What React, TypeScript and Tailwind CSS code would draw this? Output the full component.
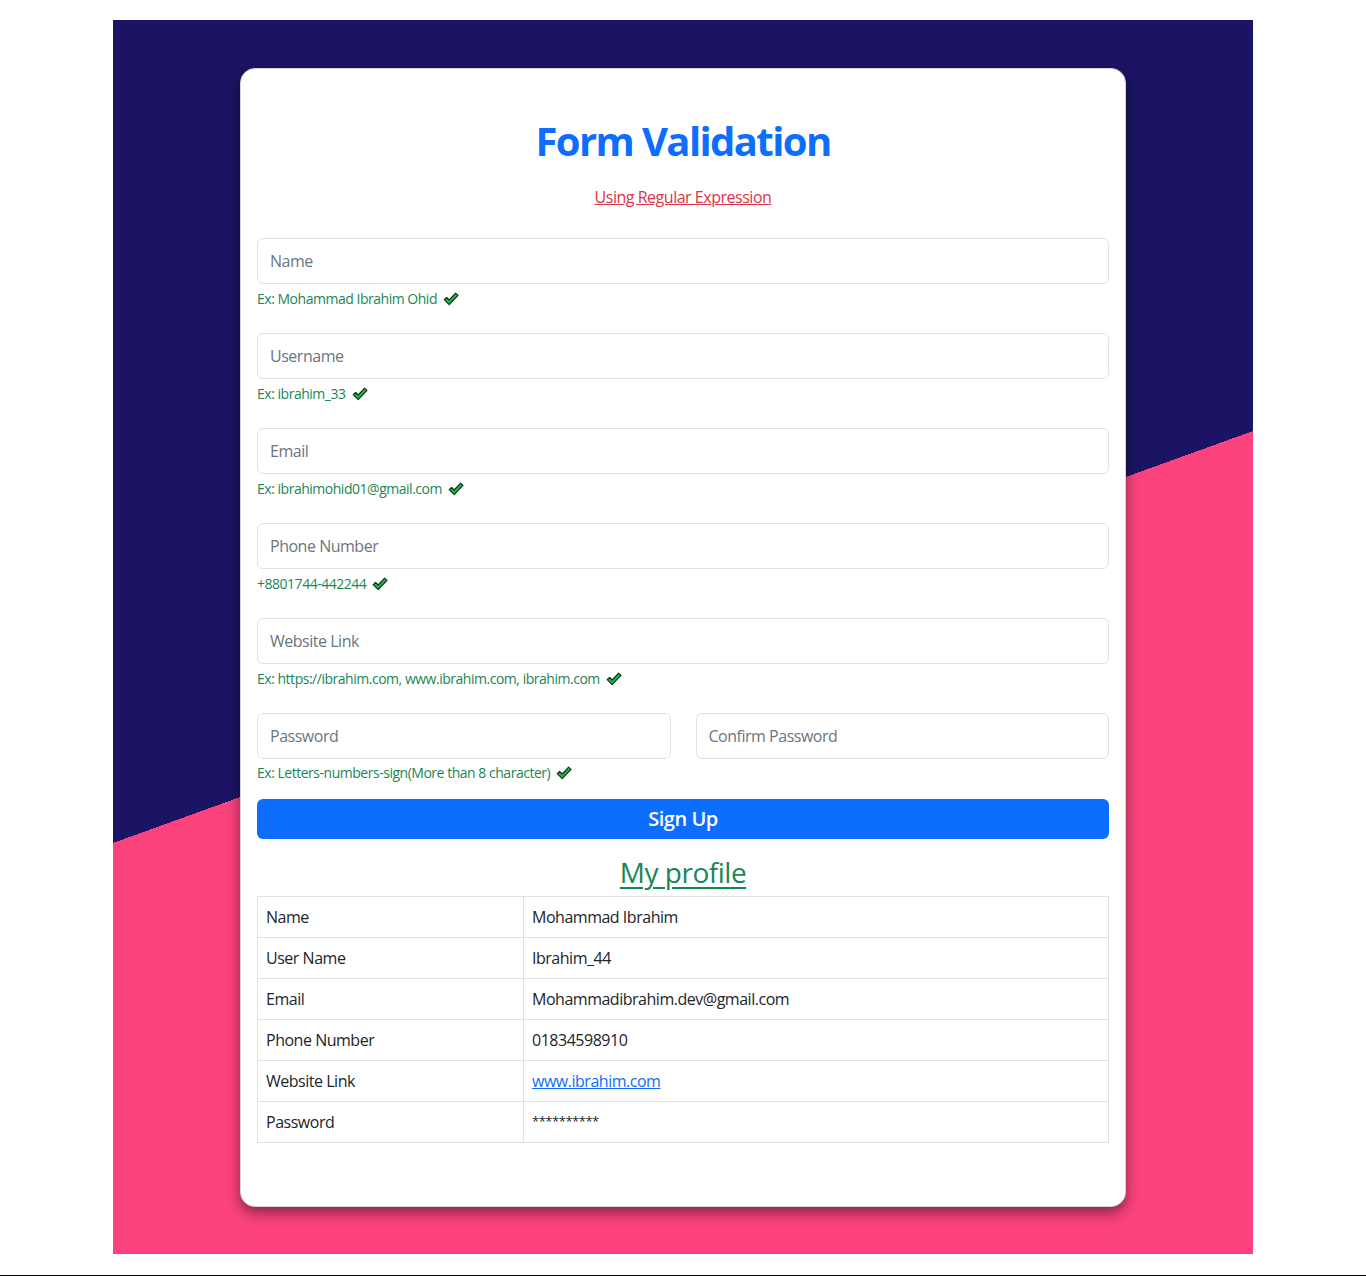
import React from "react";

const Check = () => (
  <svg width="16" height="14" viewBox="0 0 16 14" className="inline-block ml-[6px] align-[-2px]">
    <path d="M1.2 7.6 L3.6 5.4 L6.2 8 L12.6 1.2 L15 3.4 L6.2 12.6 Z" fill="#22b14c" stroke="#0b2e12" strokeWidth="1.1" strokeLinejoin="round" />
  </svg>
);

const inputCls =
  "w-full h-[46px] px-[12px] border border-[#dee2e6] rounded-[6px] text-[16px] text-[#212529] placeholder:text-[#6c757d] outline-none bg-white tracking-[-0.03em]";

const Field = ({ placeholder, help }: { placeholder: string; help: string }) => (
  <div className="mb-[24px]">
    <input placeholder={placeholder} className={inputCls} />
    <div className="mt-[4px] text-[14px] leading-[21px] text-[#198754]">
      {help}
      <Check />
    </div>
  </div>
);

const rows: [string, React.ReactNode][] = [
  ["Name", "Mohammad Ibrahim"],
  ["User Name", "Ibrahim_44"],
  ["Email", "Mohammadibrahim.dev@gmail.com"],
  ["Phone Number", "01834598910"],
  [
    "Website Link",
    <a href="#" className="text-[#0d6efd] underline">
      www.ibrahim.com
    </a>,
  ],
  ["Password", <span className="text-[13px] relative top-[-2px]">**********</span>],
];

export default function App() {
  return (
    <div className="bg-white pt-[20px] font-['Open_Sans','Noto_Sans',sans-serif] text-[#212529] tracking-[-0.03em]">
      <div className="w-[1140px] mx-auto bg-[linear-gradient(160.13deg,#1b1464_50%,#fc437d_50%)] pt-[48px] pb-[47px]">
        <div className="w-[886px] mx-auto bg-white rounded-[15px] border border-[#d6d6d6] shadow-[0_6px_14px_rgba(0,0,0,0.45)] px-[16px] pt-[48px] pb-[63px]">
          <h1 className="text-center text-[40px] leading-[48px] font-bold text-[#0d6efd] tracking-[-0.04em]">Form Validation</h1>
          <p className="text-center mt-[20px] mb-[29px] text-[16px] leading-[24px]">
            <a href="#" className="text-[#dc3545] underline">
              Using Regular Expression
            </a>
          </p>
          <Field placeholder="Name" help="Ex: Mohammad Ibrahim Ohid" />
          <Field placeholder="Username" help="Ex: ibrahim_33" />
          <Field placeholder="Email" help="Ex: ibrahimohid01@gmail.com" />
          <Field placeholder="Phone Number" help="+8801744-442244" />
          <Field placeholder="Website Link" help="Ex: https://ibrahim.com, www.ibrahim.com, ibrahim.com" />
          <div className="mb-[16px]">
            <div className="grid grid-cols-2 gap-[25px]">
              <input placeholder="Password" className={inputCls} />
              <input placeholder="Confirm Password" className={inputCls} />
            </div>
            <div className="mt-[3px] text-[14px] leading-[21px] text-[#198754]">
              Ex: Letters-numbers-sign(More than 8 character)
              <Check />
            </div>
          </div>
          <button className="w-full h-[40px] rounded-[6px] bg-[#0d6efd] text-white text-[20px] font-semibold leading-[40px]">
            Sign Up
          </button>
          <h3 className="text-center mt-[16px] mb-[7px] text-[28px] leading-[34px] font-medium">
            <a href="#" className="text-[#198754] underline decoration-2 underline-offset-[4px]">
              My profile
            </a>
          </h3>
          <table className="w-full border-collapse text-[16px]">
            <tbody>
              {rows.map(([k, v]) => (
                <tr key={k}>
                  <td className="w-[266px] border border-[#dee2e6] px-[8px] h-[41px] leading-[24px]">{k}</td>
                  <td className="border border-[#dee2e6] px-[8px] h-[41px] leading-[24px]">{v}</td>
                </tr>
              ))}
            </tbody>
          </table>
        </div>
      </div>
      <div className="mt-[21px] h-[2px] bg-black" />
    </div>
  );
}
